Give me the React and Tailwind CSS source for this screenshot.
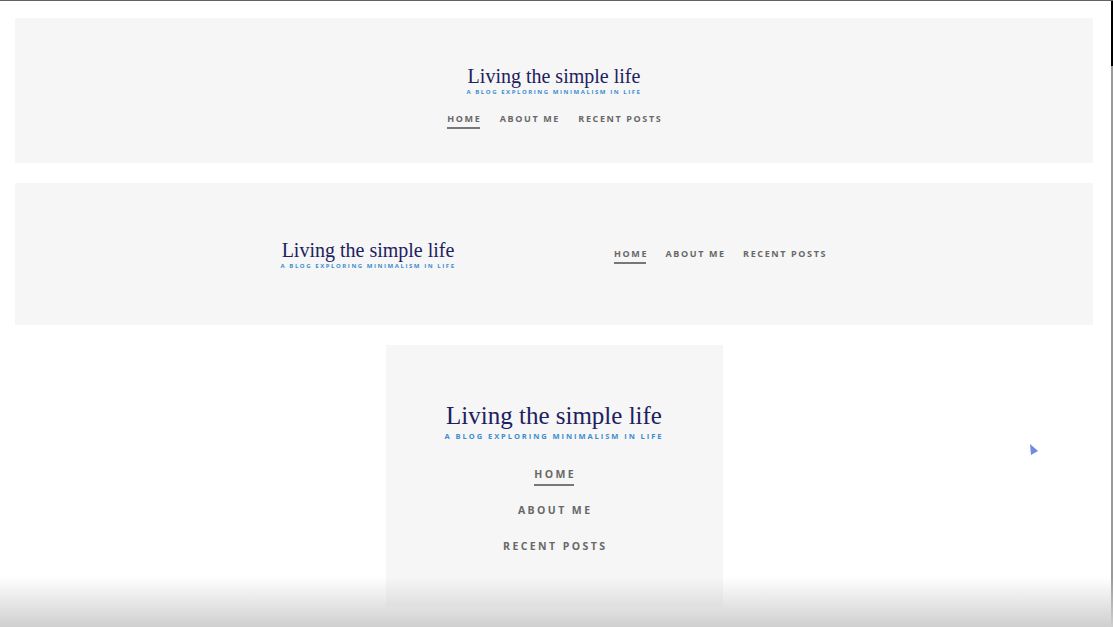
import React from 'react';

const navItems = ['Home', 'About me', 'Recent posts'];

// logo block: title + tagline
const Logo = ({ big }) => (
  <div className="flex flex-col items-center">
    <h1
      className={
        big
          ? "font-['Liberation_Serif',serif] text-[25px] leading-[28px] text-[#1d2160]"
          : "font-['Liberation_Serif',serif] text-[20px] leading-[24px] text-[#1d2160]"
      }
    >
      Living the simple life
    </h1>
    <p
      className={
        big
          ? "font-['Open_Sans',sans-serif] font-bold uppercase text-[7.5px] leading-[10px] tracking-[0.26em] text-[#3b8dd0] mt-[1px]"
          : "font-['Open_Sans',sans-serif] font-bold uppercase text-[6px] leading-[8px] tracking-[0.26em] text-[#3b8dd0]"
      }
    >
      A blog exploring minimalism in life
    </p>
  </div>
);

const NavLink = ({ label, active, big }) => (
  <a
    href="#"
    className={
      (big
        ? "text-[10.5px] leading-[14px] pb-[3px] tracking-[0.23em] "
        : "text-[9px] leading-[12px] pb-[2px] tracking-[0.18em] ") +
      "whitespace-nowrap font-['Open_Sans',sans-serif] font-bold uppercase text-[#686868] border-b-2 " +
      (active ? "border-[#777777]" : "border-transparent")
    }
  >
    <span className={big ? "inline-block mr-[-0.23em]" : "inline-block mr-[-0.18em]"}>{label}</span>
  </a>
);

export default function App() {
  return (
    <div className="relative w-[1113px] h-[627px] overflow-hidden bg-white border-t border-[#5f6360]">
      <div className="flex flex-col gap-[20px] pl-[15px] pr-[20px] pt-[17px]">
        {/* stacked header */}
        <header className="h-[145px] bg-[#f6f6f6] flex flex-col items-center pt-[46px]">
          <Logo />
          <nav className="flex gap-[20px] mt-[17px]">
            {navItems.map((item, i) => (
              <NavLink key={item} label={item} active={i === 0} />
            ))}
          </nav>
        </header>

        {/* inline header */}
        <header className="h-[142px] bg-[#f6f6f6] flex items-center">
          <div className="w-[547px] mx-auto flex items-center justify-between">
            <Logo />
            <nav className="flex gap-[19px] pt-[3px] mr-[2px]">
              {navItems.map((item, i) => (
                <NavLink key={item} label={item} active={i === 0} />
              ))}
            </nav>
          </div>
        </header>

        {/* mobile header */}
        <header className="w-[337px] h-[262px] mx-auto bg-[#f6f6f6] flex flex-col items-center pt-[57px]">
          <Logo big />
          <nav className="flex flex-col items-center gap-[17px] mt-[26px]">
            {navItems.map((item, i) => (
              <NavLink key={item} label={item} active={i === 0} big />
            ))}
          </nav>
        </header>
      </div>

      {/* mouse pointer */}
      <svg className="absolute left-[1029px] top-[442px]" width="11" height="13" viewBox="0 0 11 13">
        <polygon points="1,1 2,12 9,8" fill="#6f8be0" />
      </svg>

      {/* frame edge on the right */}
      <div className="absolute right-0 top-0 w-[2px] h-full bg-[#9a9a9a]" />
      <div className="absolute right-0 top-0 w-[2px] h-[65px] bg-black" />

      {/* player shade at bottom */}
      <div className="absolute left-0 right-0 bottom-0 h-[50px] bg-gradient-to-b from-transparent to-[#cfcfcf]" />
    </div>
  );
}
